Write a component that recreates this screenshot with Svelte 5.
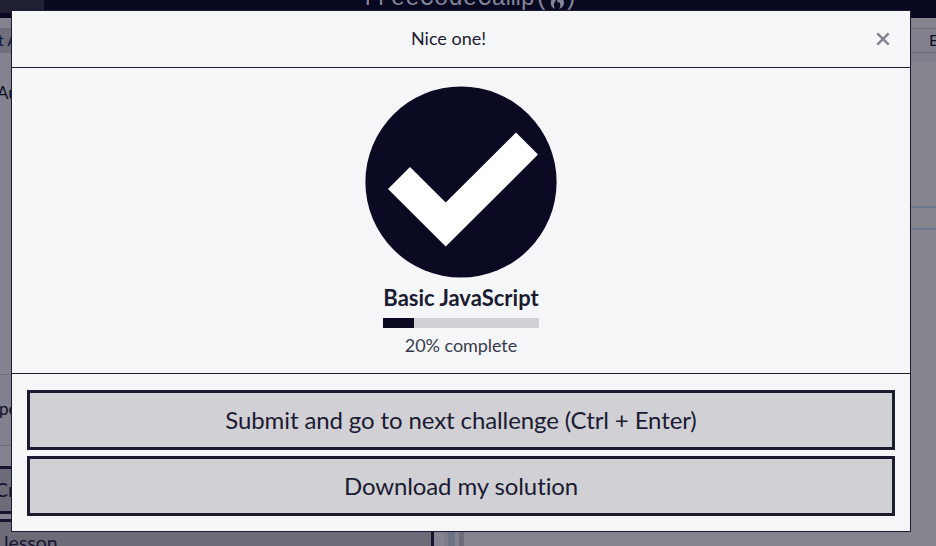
<script>
  const title = 'Basic JavaScript';
  const percent = 20;
  const actions = ['Submit and go to next challenge (Ctrl + Enter)', 'Download my solution'];
</script>

<div class="screen">
  <div class="page">
    <header class="nav">
      <div class="search"></div>
      <div class="brand">freeCodeCamp(<svg width="16" height="19" viewBox="0 0 16 19"><path d="M6 0C10 4 15 7 15 12C15 15 13 17 10 18C12 15 11.5 13 10 11C9 12 8 11 8 8C5 11 4 14 6 18C3 17 1 14 2 10C3 7 7 5 6 0Z" fill="#85859a" /></svg>)</div>
    </header>
    <div class="columns">
      <section class="lesson">
        <div class="tab">t A</div>
        <div class="text">Au</div>
        <div class="output">pe</div>
        <div class="choice check">Cr</div>
        <div class="choice next">&nbsp;lesson</div>
      </section>
      <div class="splitter"></div>
      <section class="editor">
        <div class="tabs">E</div>
        <div class="strip"></div>
        <div class="line"></div>
      </section>
    </div>
  </div>

  <div class="overlay">
    <div class="modal" role="dialog" aria-label="Nice one!">
      <div class="head">
        <span>Nice one!</span>
        <button class="close" aria-label="Close">
          <svg width="14" height="14" viewBox="0 0 14 14"><path d="M1.3 1.3L12.7 12.7M12.7 1.3L1.3 12.7" stroke="#858591" stroke-width="2.5" /></svg>
        </button>
      </div>
      <div class="body">
        <svg class="badge" width="192" height="192" viewBox="0 0 192 192">
          <circle cx="96" cy="96" r="95.6" fill="#0a0a23" />
          <path d="M23 103L45 81L80.7 116.5L151 46.5L173 68.5L80.7 160.5Z" fill="#fff" />
        </svg>
        <div class="progress">
          <h1>{title}</h1>
          <div class="track"><div class="fill" style="width: {percent}%"></div></div>
        </div>
        <div class="percent">{percent}% complete</div>
      </div>
      <div class="actions">
        {#each actions as action}
          <button>{action}</button>
        {/each}
      </div>
    </div>
  </div>
</div>

<style>
  :global(body) { margin: 0; overflow: hidden; }
  .screen {
    position: relative;
    width: 936px;
    height: 546px;
    overflow: hidden;
    font-family: Lato, sans-serif;
    font-variant-ligatures: none;
    color: #1b1b32;
  }
  * { box-sizing: border-box; }
  .page { height: 546px; display: flex; flex-direction: column; color: #0e0e29; }
  .nav { height: 18px; flex: none; display: flex; background: #080820; overflow: hidden; }
  .search { width: 44px; height: 13px; background: #212136; }
  .brand {
    display: flex;
    margin-left: 318px;
    margin-top: -14px;
    height: 26px;
    font: 24px/26px "Liberation Mono", monospace;
    color: #85859a;
  }
  .brand svg { margin: 5px -2px 0 0; }
  .columns { flex: 1; display: flex; min-height: 0; }
  .lesson {
    flex: none;
    width: 434px;
    padding-top: 10px;
    background: #82838f;
    overflow: hidden;
    font-size: 16px;
    white-space: nowrap;
  }
  .tab { height: 25px; line-height: 24px; background: #706e7b; color: #10183f; text-indent: -2px; }
  .text { height: 321px; padding-top: 29px; line-height: 22px; margin-left: -3px; font-size: 17px; }
  .output {
    height: 72px;
    line-height: 67px;
    text-indent: -1px;
    font-size: 17px;
    border-top: 1px solid #6d6d79;
    border-bottom: 1px solid #6d6d79;
    background: #7f818e;
  }
  .choice { border: 3px solid #151530; background: #6d6b78; font-size: 19.5px; color: #151530; }
  .check { height: 48px; margin: 20px 0 5px -8px; line-height: 42px; }
  .next { height: 48px; margin-left: -4px; line-height: 42px; }
  .splitter {
    flex: none;
    width: 30px;
    background: linear-gradient(90deg, #828492 0 10px, #7d7d8a 10px 14px, #6c7384 14px 21px, #82828e 21px 25px, #6e6a77 25px);
  }
  .editor { flex: 1; min-width: 0; padding-top: 10px; background: #85848f; }
  .tabs {
    height: 25px;
    padding-left: 465px;
    line-height: 22px;
    border-top: 1px solid #6d6d79;
    border-bottom: 1px solid #6d6d79;
    background: #81818e;
    overflow: hidden;
    white-space: nowrap;
    font-size: 16px;
  }
  .strip { height: 9px; background: #7f7f8c; }
  .line { height: 24px; margin-top: 144px; border-top: 2px solid #6c7691; border-bottom: 2px solid #6c7691; }

  .overlay { position: absolute; inset: 0; padding: 10px 0 0 11px; }
  .modal {
    width: 900px;
    height: 522px;
    display: flex;
    flex-direction: column;
    border: 1px solid #1b1b32;
    background: #f5f6f7;
  }
  .head {
    height: 57px;
    display: flex;
    align-items: center;
    padding: 0 20px 0 15px;
    border-bottom: 1px solid #1b1b32;
    font-size: 18px;
  }
  .head span { flex: 1; text-align: center; line-height: 26px; padding: 0 6px 2px 0; }
  .close { width: 14px; height: 14px; padding: 0; border: 0; background: none; }
  .close svg { display: block; }
  .body {
    height: 306px;
    padding-top: 18px;
    display: flex;
    flex-direction: column;
    align-items: center;
    border-bottom: 1px solid #1b1b32;
  }
  .badge { display: block; flex: none; }
  .progress { width: 156px; }
  h1 {
    margin: 5px 0 5px;
    font-size: 22px;
    line-height: 30px;
    font-weight: 700;
    text-align: center;
    white-space: nowrap;
  }
  .track { height: 10px; background: #d0d0d5; }
  .fill { height: 10px; background: #0a0a23; }
  .percent { margin-top: 4px; line-height: 26px; font-size: 18px; letter-spacing: -0.06px; color: #3b3b4f; }
  .actions { padding: 16px 15px 0; display: flex; flex-direction: column; gap: 6px; }
  .actions button {
    height: 60px;
    padding: 0;
    border: 3px solid #1b1b32;
    border-radius: 0;
    background: #d0d0d5;
    color: #1b1b32;
    font: 24px/54px Lato, sans-serif;
    font-variant-ligatures: none;
    letter-spacing: -0.11px;
  }
</style>
